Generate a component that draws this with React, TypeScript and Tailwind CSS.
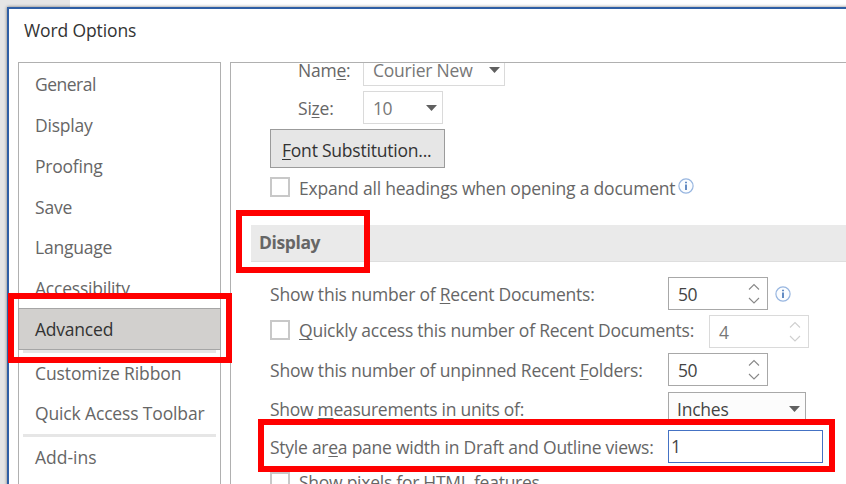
import type { ReactNode } from "react";

function NavItem({ label, className = "h-[40.8px]", textClass = "" }: { label: string; className?: string; textClass?: string }) {
  return (
    <div className={`flex shrink-0 items-center pl-4 ${className}`}>
      <span className={textClass}>{label}</span>
    </div>
  );
}

function Separator() {
  return <div className="mx-[4px] h-[3px] shrink-0 bg-[#e6e6e6]" />;
}

function Key({ children }: { children: ReactNode }) {
  return <span className="underline decoration-1 underline-offset-[2px] [text-decoration-skip-ink:none]">{children}</span>;
}

function Row({ children, className = "" }: { children: ReactNode; className?: string }) {
  return <div className={`flex shrink-0 items-center ${className}`}>{children}</div>;
}

function Checkbox() {
  return <span className="mr-[9px] size-5 shrink-0 border-2 border-[#c8c8c8] bg-white" />;
}

function Caret() {
  return (
    <svg width="11" height="6" viewBox="0 0 11 6" className="shrink-0">
      <path d="M0 0H11L5.5 6Z" fill="#606060" />
    </svg>
  );
}

function Info({ className = "" }: { className?: string }) {
  return (
    <svg width="16" height="16" viewBox="0 0 16 16" className={`shrink-0 ${className}`}>
      <circle cx="8" cy="8" r="7.1" fill="#fbfdff" stroke="#98b6e0" strokeWidth="1.2" />
      <path d="M8 6.5V12M8 3.8V5.3" stroke="#3f70b5" strokeWidth="1.6" />
    </svg>
  );
}

function Spinner({ value, disabled = false }: { value: string; disabled?: boolean }) {
  return (
    <div
      className={`flex h-[33px] w-[100px] shrink-0 items-center justify-between pr-[7px] pl-[9px] ${
        disabled ? "border border-[#dadada] text-[#777]" : "border border-[#a8a8a8] text-[#444]"
      }`}
    >
      <span className="tracking-[-0.6px]">{value}</span>
      <svg width="12" height="22" viewBox="0 0 12 22" fill="none" stroke={disabled ? "#cfcfcf" : "#888"} strokeWidth="1.1">
        <path d="M1 6.5L6 1.5L11 6.5M1 15L6 20L11 15" />
      </svg>
    </div>
  );
}

export default function App() {
  return (
    <div className="relative h-[484px] w-[846px] overflow-hidden bg-[#e5e5e5] font-['Open_Sans','Noto_Sans',sans-serif] text-[17.5px] leading-6 tracking-[-0.22px] whitespace-nowrap text-[#666]">
      <div className="ml-[70px] h-[7px] bg-white" />
      <div className="ml-[7px] h-[500px] w-[850px] border-2 border-[#2f5fa5] bg-white shadow-[0_0_3px_rgba(0,0,0,0.5)]">
        <div className="flex h-[53px] items-start pt-[9px] pl-[15px] tracking-[-0.12px] text-[#333]">
          <span>Word Options</span>
        </div>

        <div className="flex h-[440px] pl-[9px]">
          <nav className="mr-[9px] flex w-[203px] shrink-0 flex-col border border-[#b0b0b0] pt-[0.8px]">
            <NavItem label="General" textClass="tracking-[-0.5px]" />
            <NavItem label="Display" />
            <NavItem label="Proofing" />
            <NavItem label="Save" />
            <NavItem label="Language" />
            <NavItem label="Accessibility" />
            <NavItem label="Advanced" className="-mx-px mt-[-0.6px] h-[42px] border border-[#a6a6a6] bg-[#d2d0ce] text-[#333]" />
            <Separator />
            <NavItem label="Customize Ribbon" textClass="tracking-[-0.1px]" className="h-[40px]" />
            <NavItem label="Quick Access Toolbar" textClass="tracking-[-0.15px]" className="h-[41px]" />
            <Separator />
            <NavItem label="Add-ins" textClass="tracking-[0px]" className="h-[41px]" />
          </nav>

          <main className="flex min-w-0 flex-1 flex-col overflow-hidden border border-[#b0b0b0] pl-[20px]">
            <Row className="h-[23px] pl-[47px]">
              <span className="w-[65px] pb-[9px]">Nam<Key>e</Key>:</span>
              <div className="mt-[-9px] flex h-[32px] w-[142px] items-center justify-between border border-[#dadada] pr-[4px] pl-[9px] text-[#777]">
                <span>Courier New</span><Caret />
              </div>
            </Row>
            <Row className="mt-[5px] h-[33px] pl-[47px]">
              <span className="w-[65px]">Si<Key>z</Key>e:</span>
              <div className="flex h-[33px] w-[80px] items-center justify-between border border-[#dadada] pr-[5px] pl-[9px] text-[#777]">
                <span className="tracking-[-0.6px]">10</span><Caret />
              </div>
            </Row>
            <Row className="mt-[5px] pl-[19px]">
              <button className="flex h-[39px] w-[175px] items-center border border-[#9b9b9b] bg-[#e6e6e6] pt-[2px] pl-[11px] tracking-[-0.22px] text-[#333]">
                <span><Key>F</Key>ont Substitution...</span>
              </button>
            </Row>
            <Row className="mt-[5px] h-[28px] pl-[19px]">
              <Checkbox />
              <span className="pt-px tracking-[-0.2px]">Expand all headings when opening a document</span>
              <Info className="mb-[2px] ml-[3px]" />
            </Row>
            <Row className="mt-[24px] h-[37px] border-b border-[#dedede] bg-[#eaeaea] pb-[2px] pl-[8px] font-bold tracking-[-0.4px]">
              <span>Display</span>
            </Row>
            <Row className="mt-[15px] h-[33px] pl-[19px]">
              <span className="w-[398px]">Show this number of <Key>R</Key>ecent Documents:</span>
              <Spinner value="50" /><Info className="ml-[7px]" />
            </Row>
            <Row className="mt-[5px] h-[33px] pl-[19px]">
              <span className="mb-[3px] flex items-center">
                <Checkbox />
                <span className="w-[410px]"><Key>Q</Key>uickly access this number of Recent Documents:</span>
              </span>
              <Spinner value="4" disabled />
            </Row>
            <Row className="mt-[5px] h-[33px] pl-[19px]">
              <span className="w-[398px] pt-px">Show this number of unpinned Recent <Key>F</Key>olders:</span>
              <Spinner value="50" />
            </Row>
            <Row className="mt-[6px] h-[33px] pl-[19px]">
              <span className="w-[398px] tracking-[-0.28px]">Show <Key>m</Key>easurements in units of:</span>
              <div className="flex h-[33px] w-[138px] items-center justify-between border border-[#a8a8a8] bg-[#fcfcfc] pr-[5px] pl-[8px] text-[#444]">
                <span>Inches</span><Caret />
              </div>
            </Row>
            <Row className="mt-[5px] h-[33px] pl-[19px]">
              <span className="w-[398px] tracking-[-0.25px]">Style ar<Key>e</Key>a pane width in Draft and Outline views:</span>
              <div className="flex h-[33px] w-[155px] items-center border border-[#4472c4] pb-px pl-[2px] text-[#444]">1</div>
            </Row>
            <Row className="mt-[7px] h-[24px] pl-[19px]">
              <Checkbox />
              <span className="tracking-[-0.26px]">Show pixels for HTML features</span>
            </Row>
          </main>
        </div>
      </div>

      <div className="absolute top-[210px] left-[236px] h-[63px] w-[134px] border-[6px] border-[#ff0000]" />
      <div className="absolute top-[293px] left-[8px] h-[70px] w-[224px] border-[6px] border-[#ff0000]" />
      <div className="absolute top-[419px] left-[258px] h-[53px] w-[577px] border-[6px] border-[#ff0000]" />
    </div>
  );
}
